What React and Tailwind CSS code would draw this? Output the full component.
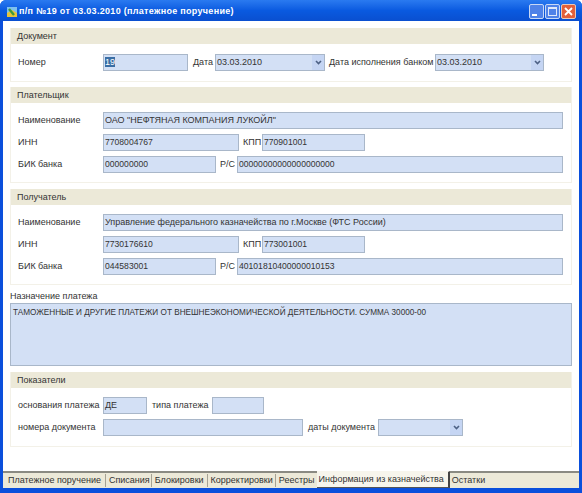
const Arrow = () => (
  <div className="w-[12px] h-[15px] bg-[#c5d5f3] flex items-center justify-center shrink-0">
    <svg width="7" height="5" viewBox="0 0 7 5">
      <path d="M1 1 L3.5 3.5 L6 1" fill="none" stroke="#4d6185" strokeWidth="1.6" />
    </svg>
  </div>
);

const Field = ({ className = "", children }) => (
  <div className={`h-[17px] bg-[#d3e0f5] border border-[#a9b7c9] pl-[1px] leading-[15px] overflow-hidden whitespace-nowrap shrink-0 ${className}`}>
    {children}
  </div>
);

const Select = ({ className = "", children }) => (
  <div className={`h-[17px] bg-[#d3e0f5] border border-[#a9b7c9] pl-[1px] leading-[15px] flex justify-between shrink-0 ${className}`}>
    <span>{children}</span>
    <Arrow />
  </div>
);

const Label = ({ className = "", children }) => (
  <span className={`leading-[17px] whitespace-nowrap shrink-0 ${className}`}>{children}</span>
);

const Section = ({ title, className = "", children }) => (
  <section className={`mx-[7px] border-b border-r border-l border-[#f3f1e8] ${className}`}>
    <div className="h-[16px] bg-[#ece9d8] pl-[6px] leading-[17px] text-[#333]">{title}</div>
    {children}
  </section>
);

const Party = ({ name, inn, kpp, bik, account }) => (
  <div className="pt-[9px] pb-[9px] pl-[7px] flex flex-col gap-[5px]">
    <div className="flex items-center">
      <Label className="w-[85px]">Наименование</Label>
      <Field className="w-[460px]">{name}</Field>
    </div>
    <div className="flex items-center">
      <Label className="w-[85px]">ИНН</Label>
      <Field className="w-[136px] text-[8.6px]">{inn}</Field>
      <Label className="ml-[4px] w-[19px]">КПП</Label>
      <Field className="w-[103px] text-[8.6px]">{kpp}</Field>
    </div>
    <div className="flex items-center">
      <Label className="w-[85px]">БИК банка</Label>
      <Field className="w-[113px] text-[8.6px]">{bik}</Field>
      <Label className="ml-[4px] w-[17px]">Р/С</Label>
      <Field className="w-[326px] text-[8.6px]">{account}</Field>
    </div>
  </div>
);

export default function App() {
  return (
    <div className="w-[582px] h-[493px] bg-[#0a4fdc] rounded-t-[6px] flex flex-col overflow-hidden text-[9px] leading-[13px] text-[#333] font-['Liberation_Sans',sans-serif]">
      {/* Title bar */}
      <div className="h-[21px] shrink-0 flex items-center pl-[6px] pr-[6px] pt-[2px] bg-gradient-to-b from-[#2a7af0] via-[#0a5ae0] to-[#0a4fd0]">
        <svg width="12" height="12" viewBox="0 0 12 12" className="shrink-0">
          <rect x="1" y="1" width="10" height="10" fill="#7fc0ee" />
          <path d="M1 7 L6 4 L11 7 L11 11 L1 11 Z" fill="#e8c53a" />
          <path d="M3 3 L8 9" stroke="#3d9a3d" strokeWidth="2.4" />
        </svg>
        <span className="ml-[1px] text-white font-bold text-[9px] tracking-[0.3px] whitespace-nowrap">
          п/п №19 от 03.03.2010 (платежное поручение)
        </span>
        <div className="ml-auto flex gap-[1px]">
          <div className="w-[15px] h-[15px] rounded-[2px] border border-[#c8d8f5] bg-[#4f82e8] flex items-end p-[2px]">
            <div className="w-[5px] h-[2px] bg-white" />
          </div>
          <div className="w-[15px] h-[15px] rounded-[2px] border border-[#c8d8f5] bg-[#4f82e8] p-[2px]">
            <div className="w-full h-full border border-[#dfe8fa] border-t-2" />
          </div>
          <div className="w-[15px] h-[15px] rounded-[2px] border border-[#e8c8b8] bg-[#e2603a] flex items-center justify-center">
            <svg width="9" height="9" viewBox="0 0 9 9">
              <path d="M1 1 L8 8 M8 1 L1 8" stroke="#fff" strokeWidth="1.8" />
            </svg>
          </div>
        </div>
      </div>

      {/* Window body */}
      <div className="flex-1 mx-[3px] mb-[5px] bg-white flex flex-col min-h-0">
        <div className="flex-1 pt-[7px]">
          <Section title="Документ">
            <div className="h-[37px] pl-[7px] pt-[10px] flex items-start">
              <Label className="w-[85px]">Номер</Label>
              <Field className="w-[85px] pl-0">
                <span className="bg-[#3a6ea5] text-white">19</span>
              </Field>
              <Label className="ml-[5px] w-[22px]">Дата</Label>
              <Select className="w-[110px]">03.03.2010</Select>
              <Label className="ml-[4px] w-[106px]">Дата исполнения банком</Label>
              <Select className="w-[109px]">03.03.2010</Select>
            </div>
          </Section>

          <Section title="Плательщик" className="mt-[5px]">
            <Party
              name={'ОАО "НЕФТЯНАЯ КОМПАНИЯ ЛУКОЙЛ"'}
              inn="7708004767"
              kpp="770901001"
              bik="000000000"
              account="00000000000000000000"
            />
          </Section>

          <Section title="Получатель" className="mt-[6px]">
            <Party
              name="Управление федерального казначейства по г.Москве (ФТС России)"
              inn="7730176610"
              kpp="773001001"
              bik="044583001"
              account="40101810400000010153"
            />
          </Section>

          <div className="mx-[7px] mt-[5px]">
            <div className="h-[13px] leading-[13px] whitespace-nowrap">Назначение платежа</div>
            <div className="h-[63px] bg-[#d3e0f5] border border-[#a9b7c9] px-[2px] pt-[2px] text-[8.2px] leading-[13px] whitespace-nowrap">
              ТАМОЖЕННЫЕ И ДРУГИЕ ПЛАТЕЖИ ОТ ВНЕШНЕЭКОНОМИЧЕСКОЙ ДЕЯТЕЛЬНОСТИ. СУММА 30000-00
            </div>
          </div>

          <Section title="Показатели" className="mt-[6px]">
            <div className="pt-[9px] pb-[10px] pl-[7px] flex flex-col gap-[5px]">
              <div className="flex items-center">
                <Label className="w-[85px]">основания платежа</Label>
                <Field className="w-[44px]">ДЕ</Field>
                <Label className="ml-[5px] w-[60px]">типа платежа</Label>
                <Field className="w-[52px]" />
              </div>
              <div className="flex items-center">
                <Label className="w-[85px]">номера документа</Label>
                <Field className="w-[200px]" />
                <Label className="ml-[5px] w-[70px]">даты документа</Label>
                <Select className="w-[85px]" />
              </div>
            </div>
          </Section>
        </div>

        {/* Tabs */}
        <div className="h-[17px] shrink-0 bg-[#ece9d8] border-t-2 border-[#8a8a82] flex leading-[13px]">
          <div className="pl-[5px] pr-[4px] border-r border-[#a5a294] my-[1px] whitespace-nowrap">Платежное поручение</div>
          <div className="pl-[3px] pr-[1px] border-r border-[#a5a294] my-[1px] whitespace-nowrap">Списания</div>
          <div className="pl-[3px] pr-[3px] border-r border-[#a5a294] my-[1px] whitespace-nowrap">Блокировки</div>
          <div className="pl-[3px] pr-[2px] border-r border-[#a5a294] my-[1px] whitespace-nowrap">Корректировки</div>
          <div className="pl-[3px] pr-[2px] my-[1px] whitespace-nowrap">Реестры</div>
          <div className="-mt-[2px] h-[17px] pl-[2px] pr-[4px] bg-[#f7f5ec] border-t border-r-2 border-b border-t-[#f7f5ec] border-r-[#444] border-b-[#555] leading-[15px] whitespace-nowrap">
            Информация из казначейства
          </div>
          <div className="pl-[2px] whitespace-nowrap leading-[14px]">Остатки</div>
        </div>
      </div>
    </div>
  );
}
